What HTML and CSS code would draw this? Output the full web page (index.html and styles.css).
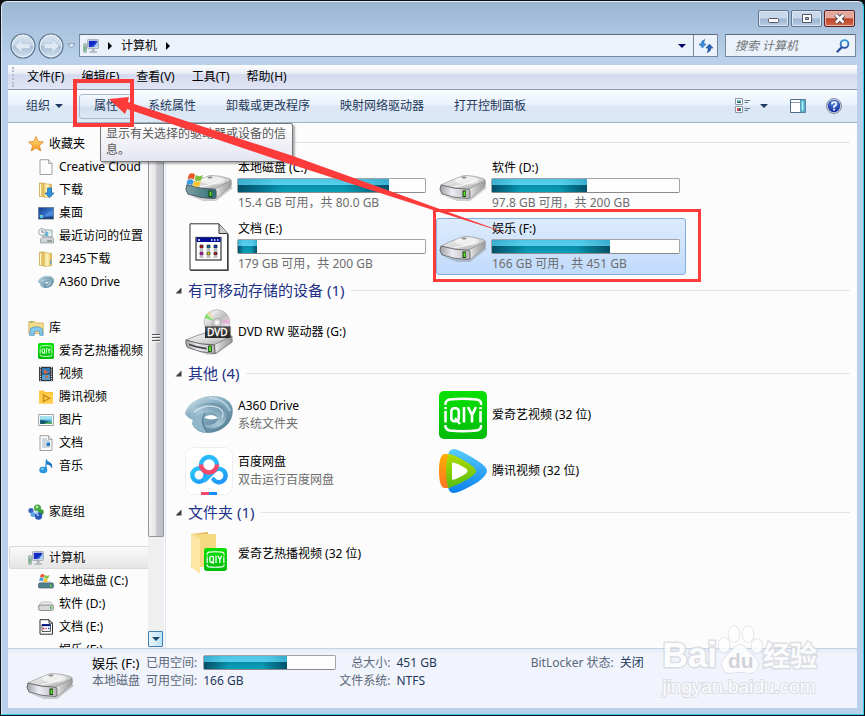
FILE: index.html
```html
<!DOCTYPE html>
<html lang="zh-CN">
<head>
<meta charset="utf-8">
<title>计算机</title>
<link rel="stylesheet" href="styles.css">
</head>
<body>
<svg class="sprite" aria-hidden="true">
  <defs>
    <linearGradient id="gMetal" x1="0" y1="0" x2="1" y2="1"><stop offset="0" stop-color="#f4f4f4"/><stop offset=".55" stop-color="#d6d6d6"/><stop offset="1" stop-color="#a0a0a0"/></linearGradient>
    <linearGradient id="gFront" x1="0" y1="0" x2="1" y2="0"><stop offset="0" stop-color="#9d9fa0"/><stop offset=".4" stop-color="#ececf4"/><stop offset="1" stop-color="#b4b4b8"/></linearGradient>
    <linearGradient id="gSide" x1="0" y1="0" x2="1" y2="0"><stop offset="0" stop-color="#f0f0f0"/><stop offset=".4" stop-color="#c4c4c4"/><stop offset="1" stop-color="#9a9a9a"/></linearGradient>
    <linearGradient id="gTeal" x1="0" y1="0" x2="1" y2="0"><stop offset="0" stop-color="#7ea2a2"/><stop offset="1" stop-color="#2d6b73"/></linearGradient>
    <linearGradient id="gScreen" x1="0" y1="0" x2="1" y2="1"><stop offset="0" stop-color="#0a2fd0"/><stop offset=".5" stop-color="#1428c0"/><stop offset="1" stop-color="#6db2ff"/></linearGradient>
    <linearGradient id="gFolder" x1="0" y1="0" x2="1" y2="0"><stop offset="0" stop-color="#f6de8b"/><stop offset=".5" stop-color="#fff2b8"/><stop offset="1" stop-color="#d9ae45"/></linearGradient>
    <linearGradient id="gStar" x1="0" y1="0" x2="0" y2="1"><stop offset="0" stop-color="#ffe680"/><stop offset="1" stop-color="#f7931e"/></linearGradient>
    <linearGradient id="gGreen" x1="0" y1="0" x2="0" y2="1"><stop offset="0" stop-color="#08e004"/><stop offset="1" stop-color="#02bb0b"/></linearGradient>
    <linearGradient id="gDesk" x1="0" y1="0" x2="1" y2="1"><stop offset="0" stop-color="#123a8a"/><stop offset=".6" stop-color="#3d78d0"/><stop offset="1" stop-color="#16408f"/></linearGradient>
    <linearGradient id="gSwirl" x1="0" y1="0" x2="1" y2="1"><stop offset="0" stop-color="#cfe3ee"/><stop offset=".5" stop-color="#7ea6bb"/><stop offset="1" stop-color="#4a748b"/></linearGradient>
    <linearGradient id="gSwirl2" x1="1" y1="0" x2="0" y2="1"><stop offset="0" stop-color="#557f97"/><stop offset=".5" stop-color="#a6c6d5"/><stop offset="1" stop-color="#6d97ad"/></linearGradient>
    <linearGradient id="gPlayBlue" x1="0" y1="0" x2="0" y2="1"><stop offset="0" stop-color="#58cdfb"/><stop offset="1" stop-color="#0b80ee"/></linearGradient>
    <linearGradient id="gPlayOrange" x1="0" y1="0" x2="0" y2="1"><stop offset="0" stop-color="#ffae00"/><stop offset="1" stop-color="#ff7426"/></linearGradient>
    <linearGradient id="gPlayGreen" x1="0" y1="0" x2="0" y2="1"><stop offset="0" stop-color="#b2dc00"/><stop offset="1" stop-color="#56bd12"/></linearGradient>
    <linearGradient id="gCloud" x1="0" y1="0" x2="1" y2="1"><stop offset="0" stop-color="#27c9f5"/><stop offset="1" stop-color="#2092fa"/></linearGradient>
    <linearGradient id="gDisc" x1="0" y1="0" x2="1" y2="1"><stop offset="0" stop-color="#d5e0d8"/><stop offset=".25" stop-color="#e9e9e9"/><stop offset=".5" stop-color="#bcbcbc"/><stop offset=".8" stop-color="#efe4ef"/><stop offset="1" stop-color="#aaa"/></linearGradient>
    <linearGradient id="gLens" x1="0" y1="0" x2="0" y2="1"><stop offset="0" stop-color="#2f97e0"/><stop offset="1" stop-color="#2c4fa5"/></linearGradient>
    <radialGradient id="gHelp" cx=".5" cy=".3" r=".7"><stop offset="0" stop-color="#5f8fe8"/><stop offset="1" stop-color="#0f2c9a"/></radialGradient>
    <linearGradient id="gNote" x1="0" y1="0" x2="1" y2="1"><stop offset="0" stop-color="#1f93dc"/><stop offset="1" stop-color="#1560b0"/></linearGradient>
    <linearGradient id="gNavBtn" x1="0" y1="0" x2="0" y2="1"><stop offset="0" stop-color="#dbe6f2"/><stop offset=".48" stop-color="#c3d4e6"/><stop offset=".52" stop-color="#a5bcd4"/><stop offset="1" stop-color="#d5e6f5"/></linearGradient>

    <symbol id="flag" viewBox="0 0 20 18">
      <path d="M3 3q4-3 7 0L8.600 8.500q-3-2.500-7 0z" fill="#e8562a"/><path d="M11 3.500q4 2.500 8 0L17 9q-4 2.500-7.500 0z" fill="#7fc242"/>
      <path d="M1.300 9.500q4-2.500 7 0L6.800 15q-3-2.500-6.500 0z" fill="#3c9be0"/><path d="M9.200 10q4 2.500 7.600 0L15 15.500q-4 2.500-7.400 0z" fill="#fbc52d"/>
    </symbol>
    <symbol id="drive" viewBox="0 -12 48 48">
      <path d="M5 22L18 27 31 27 48 14 46 12 30 25z" fill="#777" opacity=".35"/>
      <path d="M2 11Q12 6 22 2.500q2-1 5-1 8 0 17 3 3 1 2 3L30 15.500Q16 15.500 2 11z" fill="url(#gMetal)" stroke="#8a8a8a" stroke-width=".6"/>
      <path d="M29.500 15.200L46 6.500q1.200 4-.5 6.500L31 24.500z" fill="url(#gSide)" stroke="#8a8a8a" stroke-width=".6"/>
      <path d="M2 11q13.500 4.300 27 4.200 2 0 2 2v5.300q0 2-2 2-13 0-26-4.500-3.500-5-1-9z" fill="url(#gFront)" stroke="#5c5c5c" stroke-width=".8"/>
      <ellipse cx="28" cy="6.500" rx="12" ry="4" fill="#fff" opacity=".55"/><ellipse cx="25" cy="3.500" rx="2.500" ry="1" fill="#8b8b8b"/>
      <path d="M15 12.500q12-1 21-6.500" fill="none" stroke="#fff"/>
      <rect x="23.500" y="16.500" width="3.500" height="6.500" fill="#1b3b12"/><rect x="24.500" y="17.500" width="2" height="4.500" fill="#58dc2c"/>
    </symbol>
    <symbol id="sysdrive" viewBox="0 -12 48 48">
      <use href="#drive" y="-12" width="48" height="48"/>
      <path d="M2 11q13.500 4.300 27 4.200 2 0 2 2v5.300q0 2-2 2-13 0-26-4.500-3.500-5-1-9z" fill="url(#gTeal)" stroke="#456" stroke-width=".7"/>
      <rect x="23.500" y="16.500" width="3.500" height="6.500" fill="#1b3b12"/><rect x="24.500" y="17.500" width="2" height="4.500" fill="#58dc2c"/>
      <use href="#flag" x="1" y="-2" width="18" height="16"/>
    </symbol>
    <symbol id="docfile" viewBox="0 0 40 48">
      <path d="M1 .8h29l8.500 9.500V47H1z" fill="#fff" stroke="#333" stroke-width="1"/><path d="M30 1v9.500h8.500" fill="#ccc" stroke="#333"/>
      <path d="M39 11v36.500H1.500" fill="none" stroke="#444" stroke-width="1.400"/>
      <rect x="7" y="14.500" width="25" height="22.500" fill="#fff" stroke="#444" stroke-width="1.300"/><rect x="7.500" y="14.500" width="24" height="4.500" fill="#000c96"/>
      <path d="M22 17h1.500m1.500 0h1.500m1.500 0h1.500M9 17h2" stroke="#fff" stroke-width="1.500"/>
      <g stroke="#222" stroke-width=".7"><path fill="#d51616" d="M11 22h3v3h-3z"/><path fill="#087bb0" d="M18 22h3v3h-3z"/><path fill="#133ac8" d="M25 22h3v3h-3z"/><path fill="#db12cf" d="M11 29h3v3h-3z"/><path fill="#e5dc12" d="M18 29h3v3h-3z"/><path fill="#c51e23" d="M25 29h3v3h-3z"/></g>
      <path d="M10.500 27h4m3 0h4m3 0h4M10.500 34h4m3 0h4m3 0h4" stroke="#888"/>
    </symbol>
    <symbol id="dvd" viewBox="0 -1 48 48">
      <path d="M5 38L22 46 32 45 48 33v-3z" fill="#888" opacity=".4"/>
      <path d="M1 31Q12 26 20 24h20q7 2 7 4L30 36Q14 36 1 31z" fill="url(#gMetal)" stroke="#777" stroke-width=".7"/>
      <path d="M29.500 35.500L47 27v6L30 44.500z" fill="url(#gSide)" stroke="#666" stroke-width=".6"/>
      <path d="M1 31q14 5 28.500 5l.5 8.500Q16 44 2.500 38.500 0 35 1 31z" fill="url(#gFront)" stroke="#555" stroke-width=".8"/>
      <path d="M3.500 34.500q10 3.500 18 4.300v1.800q-9-1-17-4z" fill="#444"/><rect x="23.500" y="37" width="3" height="5.500" fill="#58dc2c" stroke="#204812" stroke-width=".8"/>
      <circle cx="32" cy="13.500" r="12.800" fill="url(#gDisc)" stroke="#aaa" stroke-width=".7"/>
      <path d="M29 12L19.500 9q.6-2 2-4z" fill="#6de04d" opacity=".8"/><path d="M29 11L22 4q1-1 3-2z" fill="#f3d36a" opacity=".5"/><path d="M35 13l8-3 1 5z" fill="#ee9bd8" opacity=".7"/>
      <circle cx="32" cy="13.500" r="4" fill="#ddd" stroke="#aaa"/><circle cx="32" cy="13.500" r="1.600" fill="#fff"/>
      <path d="M20 17.500h25.500V29H20z" fill="#2a2a2a"/><path d="M20 17.500h25.500v5H20z" fill="#666" opacity=".5"/>
      <text x="22" y="27" class="dvd-text">DVD</text>
    </symbol>
    <symbol id="a360" viewBox="0 0 48 40">
      <path d="M0 18Q3 6 21 1.500 41-1 47 11q3 11-6 20-8 7-18 7-12 0-16-9 0-2 1-4-6-2-8-7z" fill="url(#gSwirl)"/>
      <path d="M0 18Q12 6 29 8q12 2 13 12 0 9-11 13-8 2-12-3 12 1 14-6 0-6-10-7-10 1-14 8-7-2-9-7z" fill="url(#gSwirl2)"/>
      <path d="M9 17q12-9 25-4 6 4 3 10" fill="none" stroke="#e5f2f7" stroke-width="1.200" opacity=".8"/>
      <path d="M7 29q2-9 13-11-7 8 2 20-10-1-15-9z" fill="#91b6c8"/><path d="M20 18q-6 9 2 19" fill="none" stroke="#4e7488"/>
      <path d="M19 22.500q8-5 14 .5-7 3-14-.5z" fill="#fff"/><path d="M24 3q15 0 21 13" fill="none" stroke="#d5e8f2" stroke-width="2" opacity=".6"/>
    </symbol>
    <symbol id="pan" viewBox="0 0 48 48">
      <rect x=".5" y=".5" width="47" height="47" rx="8" fill="#fff" stroke="#eceef2"/>
      <g fill="none" stroke-width="4.500"><circle cx="14" cy="28" r="6.700" stroke="url(#gCloud)"/><path d="M28.500 32.500a6.700 6.700 0 1 0 1-9L20 33" stroke="url(#gCloud)" stroke-linecap="round"/><path d="M16 18a8 8 0 0 1 16 0" stroke="#27b9fc"/><path d="M16 17.500a8 8 0 0 0 16 0" stroke="#f5486b"/></g>
      <path d="M16 45h8v3h-8z" fill="#f5486b"/><path d="M24 45h8v3h-8z" fill="#168cf7"/>
    </symbol>
    <symbol id="iqiyi" viewBox="0 0 48 48">
      <rect width="48" height="48" rx="5" fill="url(#gGreen)"/>
      <path d="M6.500 14V12q1-3 4-3.500 13-1.500 27 0 4 .5 4.500 3.500v2M6.500 34v2q1 3 4 3.500 13 1.500 27 0 4-.5 4.500-3.500v-2" fill="none" stroke="#fff" stroke-width="2.400"/>
      <path d="M6.500 20v11.500M6.500 16v2.300M41.500 20v11.500M41.500 16v2.300M25 16v15.500M29 16l4 8 4-8M33 24v7.500" fill="none" stroke="#fff" stroke-width="2.600"/>
      <rect x="12.300" y="17.300" width="7.500" height="13" rx="3" fill="none" stroke="#fff" stroke-width="2.600"/><path d="M16 27l5 6" stroke="#fff" stroke-width="2.400"/>
    </symbol>
    <symbol id="tencent" viewBox="0 0 48 44">
      <path d="M9 6Q10 0 15 0q5 0 24 12 9 6 9 10 0 4-9 11-19 11-24 11-5 0-6-6z" fill="url(#gPlayBlue)"/>
      <path d="M0 22Q0 5 6 5h5v34H6Q0 39 0 22z" fill="url(#gPlayOrange)"/>
      <path d="M9 5q6 0 20 9 8 5 8 8t-8 8Q15 38 9 39 7 30 7 22T9 5z" fill="url(#gPlayGreen)"/><path d="M13 13.500q3-1 14 6 3 2.500 0 5-11 7-14 6z" fill="#fff"/>
    </symbol>
    <symbol id="iqfolder" viewBox="0 0 48 48">
      <path d="M6 4l17-2v34L6 38z" fill="#e3bd59"/><path d="M7 4h24v33H7z" fill="#f6d983"/><path d="M6 4l9 5v35L6 37z" fill="#fce6a4"/><use href="#iqiyi" x="19" y="18" width="23" height="23"/>
    </symbol>
    <symbol id="computer" viewBox="0 0 16 16">
      <rect x=".6" y="5.500" width="2.800" height="9" rx="1" fill="#bcc7c8" stroke="#77888a" stroke-width=".6"/><rect x="1.300" y="8.500" width="1.200" height="4" fill="#3ab54a"/>
      <rect x="4.500" y="1.500" width="11" height="9" rx=".8" fill="#d8dce2" stroke="#9299a5" stroke-width=".7"/><rect x="5.800" y="2.800" width="8.500" height="6.300" fill="url(#gScreen)"/><path d="M11 9l3.300-5v5z" fill="#a8d0ff"/>
      <path d="M9 11h2.500v2H9zM6.500 13.200h7.500v1.600H6.500z" fill="#aab1b9"/>
    </symbol>
    <symbol id="star" viewBox="0 0 16 16"><path d="M8 .5l2.200 5 5.300.4-4.100 3.600 1.400 5.500L8 12l-4.800 3 1.400-5.500L.5 5.900l5.300-.4z" fill="url(#gStar)" stroke="#d88a26" stroke-width=".8"/></symbol>
    <symbol id="page" viewBox="0 0 16 16"><path d="M2 .7h8.500L14 4.500v11H2z" fill="#fbfbfb" stroke="#999" stroke-width=".9"/><path d="M10.500.7v3.800H14" fill="#e3e3e3" stroke="#999" stroke-width=".8"/></symbol>
    <symbol id="folder" viewBox="0 0 16 16"><path d="M1.500 1h5v13.500h-5z" fill="#e5c46a" stroke="#c09a3c" stroke-width=".6"/><path d="M6 1.500l7.500 1v12L6 15.500z" fill="url(#gFolder)" stroke="#c49e42" stroke-width=".6"/><path d="M2.500 2v12" stroke="#fff7d0"/><path d="M12.700 9v4" stroke="#4aa7dd" stroke-width="1.200"/></symbol>
    <symbol id="download" viewBox="0 0 16 16"><use href="#folder" width="16" height="16"/><path d="M9.500 6h4v5H16l-4.500 4.800L7 11h2.500z" fill="#2f94dc" stroke="#186cb0" stroke-width=".7"/></symbol>
    <symbol id="desktop" viewBox="0 0 16 16"><rect x=".5" y="2.500" width="15" height="11.500" fill="url(#gDesk)" stroke="#67809c"/><path d="M1 12.500h14v1H1z" fill="#12213d"/><path d="M2 10h3v3H2z" fill="#4bd0e8"/><path d="M2.500 10h1v1h-1z" fill="#f5d33d"/><path d="M7 11q4-5 8-5v5z" fill="#619be8" opacity=".6"/></symbol>
    <symbol id="recent" viewBox="0 0 16 16"><path d="M5 2h9v7H5z" fill="#eef6f8" stroke="#9ba5a9"/><path d="M7 4h3v4H7zM11 4h2" fill="#67b3d4" stroke="#74b9d3" stroke-width=".6"/><path d="M2.500 11l2-2h9.500l1.500 2v4h-13z" fill="#ced3d5" stroke="#8a9296" stroke-width=".7"/><path d="M9 13h5" stroke="#5f666a"/><circle cx="4" cy="4" r="3.500" fill="#eef3f6" stroke="#9ba9b0"/><path d="M4 2v2.200h2" fill="none" stroke="#567" stroke-width=".8"/></symbol>
    <symbol id="library" viewBox="0 0 16 16"><path d="M.8 1.500h6l1 1.500h7.500v10.500H.8z" fill="#f5dc88" stroke="#cba94f" stroke-width=".7"/><path d="M2 2.200h3" stroke="#57b356"/><path d="M2.500 8.500Q8.500 5 14 8.500l1.300 6.800h-3.500v-3.500q-3-2-5.500 0v3.500H1.500z" fill="#85c8ed" stroke="#3e8fc2" stroke-width=".7"/></symbol>
    <symbol id="video" viewBox="0 0 16 16"><path d="M1 .8h14v14.400H1z" fill="#303437"/><path d="M2.500 1v14M13.500 1v14" stroke="#d7dade" stroke-width="1.200" stroke-dasharray="1.200 1"/><path d="M4 2h8v5.500H4z" fill="#3278b8"/><path d="M4 8.500h8V14H4z" fill="#4da0d9"/><path d="M6 3l5 4-5 .5zM8 9l3 2-4 2z" fill="#d66c44"/></symbol>
    <symbol id="tvfolder" viewBox="0 0 16 16"><path d="M1 1.500h5l1 1.500h8v11.500H1z" fill="#fcc63c"/><path d="M1 5h14v9.500H1z" fill="#ffce4e"/><path d="M5.500 6l6 3.300-6 3.300z" fill="none" stroke="#cf8f15" stroke-width="1.500"/></symbol>
    <symbol id="picture" viewBox="0 0 16 16"><path d="M.6 2.500h14.800v11H.6z" fill="#fff" stroke="#8a96a0" stroke-width=".9"/><path d="M2.200 4h11.600v8H2.200z" fill="#4daee0"/><path d="M2.200 4h11.600v3.500H2.200z" fill="#a6e2f2"/><path d="M2.200 8q5 0 11.600 2.500V12H2.200z" fill="#18556b"/><path d="M7 11q4-2 6.800-1V12H6z" fill="#51a764"/></symbol>
    <symbol id="document" viewBox="0 0 16 16"><use href="#page" width="16" height="16"/><path d="M4 4h5M4 6h8M4 8h4M4 10h4M4 12h8" stroke="#8aa2b4" stroke-width=".8"/><path d="M8.500 7.500H12V11H8.500z" fill="#2874c7"/></symbol>
    <symbol id="music" viewBox="0 0 16 16"><path d="M8 .5q1 2.500 4 4t2 6q-1.500-4-5.500-4V12H7z" fill="url(#gNote)"/><ellipse cx="5.300" cy="12" rx="4" ry="3.300" fill="#2795df"/><ellipse cx="4.500" cy="11" rx="1.500" ry="1" fill="#8bd0f7"/></symbol>
    <symbol id="homegroup" viewBox="0 0 16 16"><circle cx="3" cy="6.500" r="2.600" fill="#3560bc"/><circle cx="5" cy="10.500" r="2.500" fill="#62a6e5"/><circle cx="9.500" cy="4" r="3.600" fill="#49ac47"/><circle cx="13" cy="8" r="2.800" fill="#3d9e3a"/><circle cx="10.500" cy="12" r="3.700" fill="#2858b8"/><circle cx="8.500" cy="8.200" r="1.700" fill="#b5d9f4"/><circle cx="9" cy="2.900" r="1.200" fill="#c9edbd"/><circle cx="9.800" cy="11" r="1.200" fill="#8fb6ee"/></symbol>
    <symbol id="minidrive" viewBox="0 0 16 16"><path d="M.7 9.500L3.500 6h9l2.800 3.500z" fill="#eee" stroke="#999" stroke-width=".6"/><rect x=".6" y="9" width="14.800" height="5.500" rx="2" fill="#d7d8dc" stroke="#777" stroke-width=".8"/><path d="M12 10.500h1.500v2.500H12z" fill="#34b82b"/></symbol>
    <symbol id="minisys" viewBox="0 0 16 16"><path d="M.7 11L3 8h10l2.300 3z" fill="#d6dfe1"/><rect x=".6" y="10" width="14.800" height="5" rx="1" fill="#50808c" stroke="#476069" stroke-width=".7"/><path d="M12 11.500h1.500V14H12z" fill="#52d44a"/><use href="#flag" x="1" y="0" width="11" height="10"/></symbol>
    <symbol id="minidoc" viewBox="0 0 16 16"><path d="M2 .7h9l3.500 3.500v11H2z" fill="#fff" stroke="#333"/><path d="M11 .7v3.500h3.500" fill="none" stroke="#333"/><path d="M4 5.500h8.500v7H4z" fill="#fff" stroke="#333" stroke-width=".8"/><path d="M4 5.300h8.500v1.800H4z" fill="#00128f"/><path d="M5 9.500h1.500" stroke="#d22" stroke-width="1.500"/><path d="M7.500 9.500H9" stroke="#e04ad2" stroke-width="1.500"/><path d="M10 9.500h1.500" stroke="#155ac4" stroke-width="1.500"/></symbol>
  </defs>
</svg>

<div class="window">
  <header class="caption">
    <button class="cap" type="button" aria-label="最小化"><svg viewBox="0 0 29 15"><rect x="9.500" y="7.500" width="10" height="4" rx="1" fill="#fff" stroke="#556"/></svg></button>
    <button class="cap" type="button" aria-label="最大化"><svg viewBox="0 0 29 15"><path d="M10.500 3.500h9v8h-9z" fill="#fff" stroke="#556"/><path d="M13.500 6.500h3v2h-3z" fill="#9eb5cf" stroke="#556"/></svg></button>
    <button class="cap cap-close" type="button" aria-label="关闭"><svg viewBox="0 0 29 15"><path d="M11 4l7.500 7.500M18.500 4L11 11.500" stroke="#445" stroke-width="4.500"/><path d="M11 4l7.500 7.500M18.500 4L11 11.500" stroke="#fff" stroke-width="2.600"/></svg></button>
  </header>

  <nav class="navrow" aria-label="导航">
    <button class="round" type="button" aria-label="后退"><svg viewBox="0 0 26 26"><circle cx="13" cy="13" r="12" fill="url(#gNavBtn)" stroke="#5d738b" stroke-width="1.200"/><circle cx="13" cy="13" r="10.800" fill="none" stroke="#edf5fc" stroke-width=".8"/><path d="M5 13l7-7v4.500h8v5h-8V20z" fill="#dfe9f4" stroke="#b3c5d8" stroke-width=".7"/></svg></button>
    <button class="round" type="button" aria-label="前进"><svg viewBox="0 0 26 26"><circle cx="13" cy="13" r="12" fill="url(#gNavBtn)" stroke="#5d738b" stroke-width="1.200"/><circle cx="13" cy="13" r="10.800" fill="none" stroke="#edf5fc" stroke-width=".8"/><path d="M21 13l-7-7v4.500H6v5h8V20z" fill="#dfe9f4" stroke="#b3c5d8" stroke-width=".7"/></svg></button>
    <button class="recentbtn" type="button" aria-label="最近浏览"><svg viewBox="0 0 9 6"><path d="M.8.8h7.400L4.500 5z" fill="#e7eff8" stroke="#7f95ae" stroke-width=".9"/></svg></button>
    <div class="address">
      <svg class="i16"><use href="#computer"/></svg>
      <svg class="tri-r" viewBox="0 0 4 8"><path d="M0 0l4 4-4 4z"/></svg>
      <button class="crumb" type="button">计算机</button>
      <svg class="tri-r" viewBox="0 0 4 8"><path d="M0 0l4 4-4 4z"/></svg>
      <button class="addr-drop" type="button" aria-label="历史"><svg class="tri-d" viewBox="0 0 8 4"><path d="M0 0h8L4 4z" fill="#00006a"/></svg></button>
      <button class="refresh" type="button" aria-label="刷新"><svg viewBox="0 0 16 16"><path d="M7 1.500Q5.500 3 6 6h2l-3.500 4L1 6h2q0-3.500 4-4.500z" fill="#3b8fdc" stroke="#2a6db5" stroke-width=".6"/><path d="M9 14.500q1.500-1.500 1-4.500H8l3.500-4L15 10h-2q0 3.500-4 4.500z" fill="#2a62b8" stroke="#234f96" stroke-width=".6"/></svg></button>
    </div>
    <label class="search">
      <input type="search" placeholder="搜索 计算机" aria-label="搜索">
      <svg viewBox="0 0 14 14"><path d="M1.500 12.500L6 8" stroke="#2c4fa5" stroke-width="2.400" stroke-linecap="round"/><circle cx="8.500" cy="5" r="3.900" fill="#e9f5fd" stroke="url(#gLens)" stroke-width="1.800"/></svg>
    </label>
  </nav>

  <div class="menubar">
    <button type="button">文件(F)</button><button type="button">编辑(E)</button><button type="button">查看(V)</button><button type="button">工具(T)</button><button type="button">帮助(H)</button>
  </div>

  <div class="toolbar">
    <button class="organize" type="button">组织 <svg class="tri-d" viewBox="0 0 8 4"><path d="M0 0h8L4 4z" fill="#1e395b"/></svg></button>
    <button class="hot" type="button">属性</button>
    <button type="button">系统属性</button>
    <button type="button">卸载或更改程序</button>
    <button type="button">映射网络驱动器</button>
    <button type="button">打开控制面板</button>
    <div class="tools">
      <button type="button" aria-label="视图"><svg class="i16" viewBox="0 0 16 16"><path d="M.5.5h7v6h-7zM.5 8.500h7v6h-7z" fill="#fff" stroke="#8c97a6"/><path d="M2 2h4v1.500H2z" fill="#6cc7dd"/><path d="M2 3.500h4V5H2z" fill="#225d5e"/><path d="M2 10h2v3H2z" fill="#d8483c"/><path d="M4 10h2v3H4z" fill="#3f9f44"/><path d="M4 11h1.500v2H4z" fill="#2b56bd"/><path d="M9.500 2.500H15M9.500 4.500H13M9.500 10.500H15M9.500 12.500H13" stroke="#66788d"/></svg></button>
      <button type="button" aria-label="更多选项"><svg class="tri-d" viewBox="0 0 8 4"><path d="M0 0h8L4 4z" fill="#1e395b"/></svg></button>
      <button class="preview" type="button" aria-label="预览窗格"><svg class="i16" viewBox="0 0 16 16"><path d="M.5 1.500h15v13H.5z" fill="#fff" stroke="#506c8e"/><path d="M1 4.500h9" stroke="#8fa0b5"/><path d="M10.500 2h4.500v12h-4.500z" fill="#65c4dc" stroke="#5a9ab8"/><path d="M12.500 4v8" stroke="#c8f0f7"/></svg></button>
      <button type="button" aria-label="帮助"><svg class="i16" viewBox="0 0 16 16"><circle cx="8" cy="8" r="7.500" fill="#d7dce7" stroke="#6b7488" stroke-width=".8"/><circle cx="8" cy="8" r="6.200" fill="url(#gHelp)"/><path d="M5.800 6.300q0-2.300 2.300-2.300t2.300 2Q10.400 7.300 8 8.500v1.300" fill="none" stroke="#fff" stroke-width="1.600"/><path d="M7.200 10.800h1.700v1.600H7.200z" fill="#fff"/></svg></button>
    </div>
    <div class="tooltip" role="tooltip">显示有关选择的驱动器或设备的信息。</div>
  </div>

  <div class="body">
    <nav class="tree" aria-label="文件夹">
      <ul>
        <li><a class="root" href="#"><svg class="i16"><use href="#star"/></svg>收藏夹</a></li>
        <li><a href="#"><svg class="i16"><use href="#page"/></svg>Creative Cloud</a></li>
        <li><a href="#"><svg class="i16"><use href="#download"/></svg>下载</a></li>
        <li><a href="#"><svg class="i16"><use href="#desktop"/></svg>桌面</a></li>
        <li><a href="#"><svg class="i16"><use href="#recent"/></svg>最近访问的位置</a></li>
        <li><a href="#"><svg class="i16"><use href="#folder"/></svg>2345下载</a></li>
        <li><a href="#"><svg class="i16"><use href="#a360"/></svg>A360 Drive</a></li>
      </ul>
      <ul>
        <li><a class="root" href="#"><svg class="i16"><use href="#library"/></svg>库</a></li>
        <li><a href="#"><svg class="i16"><use href="#iqiyi"/></svg>爱奇艺热播视频</a></li>
        <li><a href="#"><svg class="i16"><use href="#video"/></svg>视频</a></li>
        <li><a href="#"><svg class="i16"><use href="#tvfolder"/></svg>腾讯视频</a></li>
        <li><a href="#"><svg class="i16"><use href="#picture"/></svg>图片</a></li>
        <li><a href="#"><svg class="i16"><use href="#document"/></svg>文档</a></li>
        <li><a href="#"><svg class="i16"><use href="#music"/></svg>音乐</a></li>
      </ul>
      <ul><li><a class="root" href="#"><svg class="i16"><use href="#homegroup"/></svg>家庭组</a></li></ul>
      <ul>
        <li><a class="root current" href="#"><svg class="i16"><use href="#computer"/></svg>计算机</a></li>
        <li><a href="#"><svg class="i16"><use href="#minisys"/></svg>本地磁盘 (C:)</a></li>
        <li><a href="#"><svg class="i16"><use href="#minidrive"/></svg>软件 (D:)</a></li>
        <li><a href="#"><svg class="i16"><use href="#minidoc"/></svg>文档 (E:)</a></li>
        <li><a href="#"><svg class="i16"></svg>娱乐 (F:)</a></li>
      </ul>
    </nav>
    <div class="scroll">
      <div class="thumb"><span class="grip"></span></div>
      <button class="scroll-down" type="button" aria-label="向下滚动"><svg class="tri-d" viewBox="0 0 8 4"><path d="M0 0h8L4 4z" fill="#1b4a6b"/></svg></button>
    </div>

    <main class="content">
      <section>
        <h2 class="plain"></h2>
        <div class="tiles drives">
          <a class="tile" href="#"><svg class="i48"><use href="#sysdrive"/></svg><span class="info"><span>本地磁盘 (C:)</span><span class="bar"><span style="width:81%"></span></span><span class="sub">15.4 GB 可用，共 80.0 GB</span></span></a>
          <a class="tile" href="#"><svg class="i48"><use href="#drive"/></svg><span class="info"><span>软件 (D:)</span><span class="bar"><span style="width:51%"></span></span><span class="sub">97.8 GB 可用，共 200 GB</span></span></a>
          <a class="tile" href="#"><svg class="i48"><use href="#docfile"/></svg><span class="info"><span>文档 (E:)</span><span class="bar"><span style="width:10%"></span></span><span class="sub">179 GB 可用，共 200 GB</span></span></a>
          <a class="tile selected" href="#"><svg class="i48"><use href="#drive"/></svg><span class="info"><span>娱乐 (F:)</span><span class="bar"><span style="width:63%"></span></span><span class="sub">166 GB 可用，共 451 GB</span></span></a>
        </div>
      </section>
      <section>
        <h2><svg class="open" viewBox="0 0 7 7"><path d="M6.500.5v6h-6z"/></svg>有可移动存储的设备 (1)</h2>
        <div class="tiles"><a class="tile" href="#"><svg class="i48"><use href="#dvd"/></svg><span class="info">DVD RW 驱动器 (G:)</span></a></div>
      </section>
      <section>
        <h2><svg class="open" viewBox="0 0 7 7"><path d="M6.500.5v6h-6z"/></svg>其他 (4)</h2>
        <div class="tiles">
          <a class="tile" href="#"><svg class="i48"><use href="#a360"/></svg><span class="info"><span>A360 Drive</span><span class="sub">系统文件夹</span></span></a>
          <a class="tile" href="#"><svg class="i48"><use href="#iqiyi"/></svg><span class="info">爱奇艺视频 (32 位)</span></a>
          <a class="tile" href="#"><svg class="i48"><use href="#pan"/></svg><span class="info"><span>百度网盘</span><span class="sub">双击运行百度网盘</span></span></a>
          <a class="tile" href="#"><svg class="i48"><use href="#tencent"/></svg><span class="info">腾讯视频 (32 位)</span></a>
        </div>
      </section>
      <section>
        <h2><svg class="open" viewBox="0 0 7 7"><path d="M6.500.5v6h-6z"/></svg>文件夹 (1)</h2>
        <div class="tiles"><a class="tile" href="#"><svg class="i48"><use href="#iqfolder"/></svg><span class="info">爱奇艺热播视频 (32 位)</span></a></div>
      </section>
    </main>
  </div>

  <footer class="details">
    <svg class="i48"><use href="#drive"/></svg>
    <div class="who"><strong>娱乐 (F:)</strong><span>本地磁盘</span></div>
    <dl class="usage"><dt>已用空间:</dt><dd><span class="bar"><span style="width:63%"></span></span></dd><dt>可用空间:</dt><dd>166 GB</dd></dl>
    <dl class="size"><dt>总大小:</dt><dd>451 GB</dd><dt>文件系统:</dt><dd>NTFS</dd></dl>
    <dl class="lock"><dt>BitLocker 状态:</dt><dd>关闭</dd></dl>
  </footer>
</div>

<svg class="marks" viewBox="0 0 865 716" aria-hidden="true">
  <path d="M75 81h57v44H75z" fill="none" stroke="#fd3b3b" stroke-width="4"/>
  <path d="M434.500 210.500h265v70h-265z" fill="none" stroke="#fd3b3b" stroke-width="3"/>
  <path d="M109 99l20-2-1 5 165 54 144 52 75 27-76-24-146-47L127 109l-2 5z" fill="#fd3b3b"/>
</svg>

<div class="watermark">
  <div class="mark-row"><span>Bai</span>
    <svg viewBox="0 0 46 52"><g fill="#fff" stroke="#d6d8dc" stroke-width="1.500"><ellipse cx="7" cy="21" rx="5.500" ry="7.500"/><ellipse cx="17" cy="10" rx="5.500" ry="8"/><ellipse cx="31" cy="10" rx="5.500" ry="8"/><ellipse cx="40" cy="22" rx="5.500" ry="7"/><path d="M23 21q5 0 9 7 9 7 9 12 0 9-9 9-5-1-9-1t-9 1q-9 0-9-9 0-5 9-12 4-7 9-7z"/></g><text x="11" y="44" class="du">du</text></svg>
    <span class="cn">经验</span></div>
  <div class="site">jingyan.baidu.com</div>
</div>
</body>
</html>
```

FILE: styles.css
```css
* { box-sizing: border-box; }
body {
  margin: 0;
  background: #0c1118;
  color: #000;
  font: 12px/18px "Noto Sans", "Noto Sans CJK SC", sans-serif;
  overflow: hidden;
}
button {
  margin: 0;
  padding: 0;
  border: 0;
  background: none;
  font: inherit;
  color: inherit;
}
a { color: inherit; text-decoration: none; }
ul, dl, dd, h2 { margin: 0; padding: 0; list-style: none; font-weight: normal; }
svg { display: block; flex: none; }
.sprite { position: absolute; width: 0; height: 0; }
.i16 { width: 16px; height: 16px; }
.i48 { width: 48px; height: 48px; }
.tri-d { width: 8px; height: 4px; }
.tri-r { width: 4px; height: 8px; }
.dvd-text { font: 10px "Noto Sans", sans-serif; fill: #fff; stroke: #fff; stroke-width: .3px; }

.window {
  display: flex;
  flex-direction: column;
  height: calc(100vh - 2px);
  margin: 1px;
  padding: 0 6px 6px;
  border: 1px solid;
  border-color: #e2eefa #2fd0e8 #2fd0e8 #dbe8f5;
  border-radius: 6px 6px 0 0;
  background: linear-gradient(#9bb5d3, #b9d1ea 56px, #b9d1ea);
}

.caption {
  display: flex;
  justify-content: flex-end;
  gap: 2px;
  height: 32px;
  padding: 8px 2px 0 0;
}
.cap {
  width: 31px;
  height: 17px;
  border: 1px solid #60758f;
  border-radius: 2px;
  background: linear-gradient(#c9d8ea 48%, #9cb4d0 52%, #b9cde4);
  box-shadow: inset 0 0 0 1px #dce8f5;
}
.cap svg { width: 29px; height: 15px; }
.cap-close {
  border-color: #5b1f22;
  background: linear-gradient(#e3a79d 45%, #bd4128 52%, #d1684a);
  box-shadow: inset 0 0 0 1px #e9b9ae;
}

.navrow {
  display: flex;
  align-items: center;
  height: 23px;
  margin-bottom: 8px;
  padding: 0 1px 0 2px;
}
.round { margin-right: 2px; }
.round svg { width: 26px; height: 26px; }
.recentbtn { margin: 0 3px 0 1px; }
.recentbtn svg { width: 9px; height: 6px; }
.address, .search {
  display: flex;
  align-items: center;
  height: 23px;
  border: 1px solid #74889f;
  border-top-color: #5a6b80;
  border-radius: 1px;
  background: #ebf2fa;
}
.address {
  flex: 1;
  gap: 9px;
  padding-left: 3px;
}
.crumb { height: 20px; }
.addr-drop { margin-left: auto; }
.refresh {
  display: grid;
  place-items: center;
  width: 24px;
  height: 21px;
  margin-left: -2px;
  border-left: 1px solid #74889f;
}
.refresh svg { width: 16px; height: 16px; }
.search {
  width: 131px;
  margin-left: 7px;
  padding: 0 5px 0 9px;
}
.search input {
  flex: 1;
  min-width: 0;
  padding: 0;
  border: 0;
  outline: 0;
  background: none;
  font: italic 12px/18px "Noto Sans", "Noto Sans CJK SC", sans-serif;
}
.search input::placeholder { color: #6f7378; opacity: 1; }
.search svg { width: 14px; height: 14px; }

.menubar {
  position: relative;
  display: flex;
  flex: none;
  gap: 17px;
  height: 25px;
  padding-left: 19px;
  border-bottom: 1px solid #8f9bb0;
  background: linear-gradient(#fff, #e7ebf5 36%, #d4daee 40%, #e1e5f5);
}
.menubar::before {
  content: "";
  position: absolute;
  left: 4px;
  top: 2px;
  bottom: 2px;
  border-left: 2px dotted #b2bccf;
}
.toolbar {
  position: relative;
  display: flex;
  flex: none;
  align-items: center;
  height: 33px;
  padding-left: 18px;
  border-bottom: 1px solid #9fb1ca;
  background: linear-gradient(#fbfdff, #e9f1fb 45%, #dce6f4 52%, #dde9f7);
  color: #1e395b;
}
.toolbar > button { padding: 0 15px; height: 25px; }
.toolbar > .organize { display: flex; align-items: center; gap: 5px; padding: 0; margin-right: 16px; }
.toolbar > .hot {
  padding: 0 14px;
  border: 1px solid #a9bbd2;
  border-radius: 3px;
  background: linear-gradient(#f3f8fd, #e0eaf6 48%, #d1dfef 52%, #dbe7f5);
}
.tools { display: flex; align-items: center; margin-left: auto; padding-right: 15px; gap: 9px; }
.preview { margin: 0 11px 0 13px; }
.tooltip {
  position: absolute;
  z-index: 2;
  left: 92px;
  top: 33px;
  width: 193px;
  padding: 2px 5px 3px;
  border: 1px solid #767676;
  border-radius: 2px;
  background: linear-gradient(#fff, #e4e5f0);
  box-shadow: 2px 2px 2px rgba(0, 0, 0, .3);
  color: #575757;
  line-height: 16px;
}

.body {
  display: flex;
  flex: 1;
  min-height: 0;
  background: #fcfcfc;
}
.tree {
  width: 140px;
  padding-top: 9px;
  overflow: hidden;
}
.tree ul + ul { margin-top: 23px; }
.tree a {
  display: flex;
  align-items: center;
  gap: 5px;
  height: 23px;
  padding-left: 30px;
  white-space: nowrap;
}
.tree .root { padding-left: 20px; }
.tree .current {
  margin-left: 1px;
  padding-left: 18px;
  border: 1px solid #d9d9d9;
  border-right: 0;
  border-radius: 3px 0 0 3px;
  background: linear-gradient(#fafafa, #e5e5e5);
}
.scroll {
  display: flex;
  flex-direction: column;
  width: 16px;
  padding-bottom: 1px;
  background: #efefef;
}
.thumb {
  display: grid;
  place-items: center;
  flex: 0 1 79%;
  padding-top: 18px;
  border: 1px solid #92959b;
  border-top: 0;
  border-radius: 0 0 2px 2px;
  background: linear-gradient(90deg, #f5f5f5, #e6e6e8 45%, #c8c8ce 55%, #bdbdc5);
}
.grip {
  width: 8px;
  height: 9px;
  background: repeating-linear-gradient(#555 0 1px, #f5f5f5 1px 2px, transparent 2px 3px);
}
.scroll-down {
  display: grid;
  place-items: center;
  width: 15px;
  height: 16px;
  margin-top: auto;
  border: 1px solid #3c7fb1;
  border-radius: 1px;
  background: linear-gradient(90deg, #e8f6fd, #bce2f6);
}

.content {
  flex: 1;
  min-width: 0;
  margin-left: 1px;
  padding: 6px 7px 0 9px;
  border-left: 1px solid #dce6f4;
  overflow: hidden;
}
h2 {
  display: flex;
  align-items: center;
  height: 26px;
  color: #1e3287;
  font-size: 15px;
}
h2::after {
  content: "";
  flex: 1;
  height: 1px;
  margin-left: 7px;
  background: #e0e3e8;
}
.open { width: 7px; height: 7px; margin-right: 6px; fill: #404040; }
.tiles {
  display: grid;
  grid-template-columns: repeat(auto-fill, 250px);
  grid-auto-rows: 56px;
  gap: 0 4px;
  padding: 1px 0 0 7px;
}
.drives {
  grid-auto-rows: 57px;
  row-gap: 4px;
  padding: 2px 0 2px 7px;
}
.tile {
  display: flex;
  align-items: center;
  gap: 5px;
  padding-left: 3px;
}
.selected {
  border: 1px solid #84acdd;
  border-radius: 3px;
  padding-left: 2px;
  background: linear-gradient(#dcebfc, #c1dbfc);
}
.info { display: flex; flex-direction: column; white-space: nowrap; }
.drives .info { line-height: 20px; }
.sub { color: #6d6d6d; }
.bar {
  display: block;
  width: 189px;
  height: 15px;
  border: 1px solid #a4a4a4;
  border-bottom-color: #8a8a8a;
  border-radius: 2px;
  background: #fdfdfd;
}
.tile .bar { margin-left: -1px; }
.bar span {
  display: block;
  height: 13px;
  background:
    linear-gradient(90deg, rgba(0, 50, 70, .65), transparent 30%, transparent 70%, rgba(0, 50, 70, .65)) 0 6px / 100% 7px no-repeat,
    linear-gradient(90deg, rgba(0, 110, 150, .3), transparent 25%, transparent 75%, rgba(0, 110, 150, .3)),
    linear-gradient(#4cc4e4, #5ad0ec 45%, #078ca8 48%, #0aa0b8);
}

.details {
  display: flex;
  flex: none;
  height: 60px;
  padding: 5px 0 0 18px;
  border-top: 1px solid #c3d3e8;
  background: linear-gradient(#e6ecf6, #f1f4fc 6px);
  color: #5a6779;
}
.details > svg { margin-top: 6px; }
.details dl { display: grid; grid-template-columns: auto auto; grid-auto-rows: 18px; gap: 0 6px; }
.details dt { text-align: right; }
.details dd { color: #1e395b; }
.who { width: 54px; margin-left: 18px; white-space: nowrap; }
.who strong, .who span { display: block; }
.who strong { color: #000; font-size: 13px; font-weight: normal; }
.details .bar { width: 133px; margin-top: 1px; }
.size { margin-left: 3px; }
.lock { margin-left: 94px; }

.marks { position: absolute; z-index: 3; left: 0; top: 0; width: 865px; height: 716px; pointer-events: none; }
.watermark {
  position: absolute;
  z-index: 4;
  right: 48px;
  bottom: 18px;
  opacity: .8;
  color: #fff;
  -webkit-text-stroke: 3px #d6d8dc;
  paint-order: stroke fill;
  font-family: "Liberation Sans", "Noto Sans CJK SC", sans-serif;
}
.mark-row { display: flex; align-items: flex-end; font: bold 35px/42px "Liberation Sans", sans-serif; }
.mark-row svg { width: 46px; height: 52px; -webkit-text-stroke: 0; }
.du { font: bold 21px "Liberation Sans", sans-serif; fill: #c9ccd1; }
.cn { font: bold 27px/42px "Noto Sans CJK SC", sans-serif; }
.site { font: 19px/22px "Liberation Sans", sans-serif; -webkit-text-stroke-width: 2px; }
```
